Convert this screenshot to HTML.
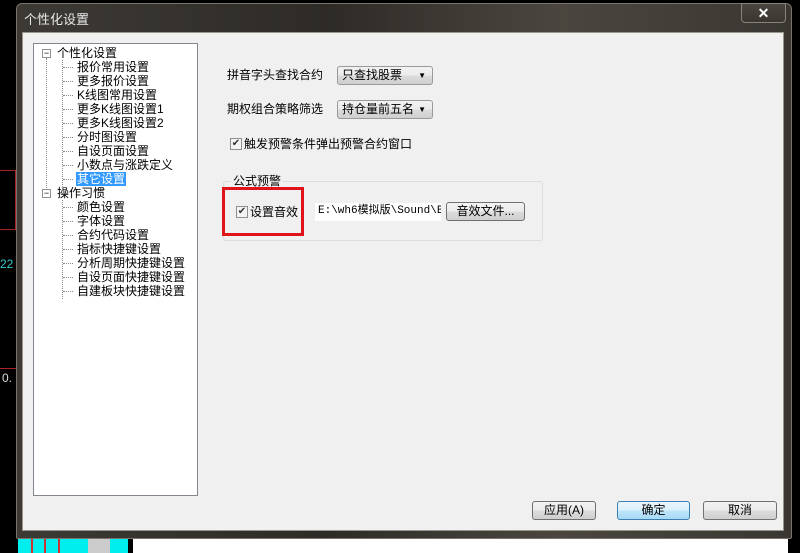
<!DOCTYPE html>
<html><head><meta charset="utf-8"><style>
*{margin:0;padding:0;box-sizing:border-box}
body{width:800px;height:553px;background:#000;position:relative;overflow:hidden;font-family:"Liberation Sans","Noto Sans CJK SC","WenQuanYi Zen Hei",sans-serif;font-size:12px;color:#000}
.a{position:absolute}
.frame{left:16px;top:3px;width:776px;height:536px;background:linear-gradient(90deg,#3d3a35,#2e2b27 40%,#4a463f 70%,#3a3732);border:1px solid #7a756c;border-radius:6px 6px 2px 2px}
.client{left:22px;top:32px;width:762px;height:499px;background:#f0f0f0;border:1px solid #9a958c}
.tree{left:33px;top:43px;width:165px;height:453px;background:#fff;border:1px solid #828790}
.t{position:absolute;white-space:nowrap;line-height:14px;font-size:12px}
.btn{position:absolute;height:19px;border:1px solid #707070;border-radius:3px;background:linear-gradient(#f2f2f2,#ebebeb 50%,#dcdcdc 51%,#cfcfcf);text-align:center;line-height:17px;font-size:12px}
.cb{position:absolute;width:12px;height:12px;border:1px solid #8e8f8f;background:#f4f4f4;font-size:10px;line-height:10px;text-align:center;color:#333}
.dots{position:absolute;border-left:1px dotted #888}
.h{position:absolute;border-top:1px dotted #888;width:10px;left:29px}
.pm{position:absolute;width:9px;height:9px;border:1px solid #919191;background:#fff;font-size:9px;line-height:6px;text-align:center}
</style></head><body>
<div class="a" style="left:0;top:170px;width:16px;height:60px;border:1px solid #a22;border-left:none"></div>
<div class="a" style="left:0;top:257px;color:#3cc;font-size:12px">22</div>
<div class="a" style="left:2px;top:371px;color:#ddd;font-size:12px">0.</div>
<div class="a" style="left:0;top:368px;width:16px;border-top:1px solid #a22"></div>
<div class="a" style="left:18px;top:538px;width:110px;height:15px;background:#0ee"></div>
<div class="a" style="left:31px;top:538px;width:2px;height:15px;background:#c33"></div>
<div class="a" style="left:44px;top:538px;width:2px;height:15px;background:#c33"></div>
<div class="a" style="left:58px;top:538px;width:2px;height:15px;background:#c33"></div>
<div class="a" style="left:133px;top:538px;width:655px;height:15px;background:#fff"></div>
<div class="a" style="left:88px;top:538px;width:22px;height:15px;background:#ccc"></div>
<div class="a frame"></div>
<div class="a" style="left:24px;top:9px;color:#e8e8e8;font-size:13px">个性化设置</div>
<div class="a" style="left:741px;top:3px;width:45px;height:20px;border:1px solid #8a857c;border-radius:0 0 4px 4px;background:linear-gradient(#4a463f,#3a3630);color:#fff;text-align:center;font-weight:bold;font-size:14px;line-height:18px">✕</div>
<div class="a client"></div>
<div class="a tree">
<div class="dots" style="left:12px;top:14px;height:136px"></div>
<div class="dots" style="left:28px;top:16px;height:127px"></div>
<div class="dots" style="left:28px;top:156px;height:99px"></div>
<div class="h" style="top:23px"></div><div class="h" style="top:37px"></div><div class="h" style="top:51px"></div><div class="h" style="top:65px"></div><div class="h" style="top:79px"></div><div class="h" style="top:93px"></div><div class="h" style="top:107px"></div><div class="h" style="top:121px"></div><div class="h" style="top:135px"></div>
<div class="h" style="top:163px"></div><div class="h" style="top:177px"></div><div class="h" style="top:191px"></div><div class="h" style="top:205px"></div><div class="h" style="top:219px"></div><div class="h" style="top:233px"></div><div class="h" style="top:247px"></div>
<div class="pm" style="left:8px;top:5px">−</div>
<div class="pm" style="left:8px;top:145px">−</div>
<div class="t" style="left:23px;top:2px">个性化设置</div>
<div class="t" style="left:43px;top:16px">报价常用设置</div>
<div class="t" style="left:43px;top:30px">更多报价设置</div>
<div class="t" style="left:43px;top:44px">K线图常用设置</div>
<div class="t" style="left:43px;top:58px">更多K线图设置1</div>
<div class="t" style="left:43px;top:72px">更多K线图设置2</div>
<div class="t" style="left:43px;top:86px">分时图设置</div>
<div class="t" style="left:43px;top:100px">自设页面设置</div>
<div class="t" style="left:43px;top:114px">小数点与涨跌定义</div>
<div class="t" style="left:42px;top:128px;background:#3399ff;color:#fff;padding:0 1px">其它设置</div>
<div class="t" style="left:23px;top:142px">操作习惯</div>
<div class="t" style="left:43px;top:156px">颜色设置</div>
<div class="t" style="left:43px;top:170px">字体设置</div>
<div class="t" style="left:43px;top:184px">合约代码设置</div>
<div class="t" style="left:43px;top:198px">指标快捷键设置</div>
<div class="t" style="left:43px;top:212px">分析周期快捷键设置</div>
<div class="t" style="left:43px;top:226px">自设页面快捷键设置</div>
<div class="t" style="left:43px;top:240px">自建板块快捷键设置</div>
</div>
<div class="t" style="left:227px;top:68px">拼音字头查找合约</div>
<div class="btn" style="left:337px;top:66px;width:96px;text-align:left;padding-left:4px;border-color:#9a9a9a">只查找股票<span style="position:absolute;right:6px;font-size:8px">▼</span></div>
<div class="t" style="left:227px;top:102px">期权组合策略筛选</div>
<div class="btn" style="left:337px;top:100px;width:96px;text-align:left;padding-left:4px;border-color:#9a9a9a">持仓量前五名<span style="position:absolute;right:6px;font-size:8px">▼</span></div>
<div class="cb" style="left:230px;top:138px">✔</div>
<div class="t" style="left:244px;top:137px">触发预警条件弹出预警合约窗口</div>
<div class="a" style="left:223px;top:181px;width:320px;height:60px;border:1px solid #dcdcdc;border-radius:3px"></div>
<div class="t" style="left:231px;top:174px;background:#f0f0f0;padding:0 2px">公式预警</div>
<div class="cb" style="left:236px;top:206px">✔</div>
<div class="t" style="left:250px;top:205px">设置音效</div>
<div class="a" style="left:222px;top:187px;width:82px;height:49px;border:3px solid #e0121a"></div>
<div class="a" style="left:315px;top:203px;width:126px;height:18px;background:#fff;font-family:'Liberation Mono','Noto Sans CJK SC',monospace;font-size:11px;line-height:17px;padding-left:3px;white-space:nowrap;overflow:hidden">E:\wh6模拟版\Sound\B</div>
<div class="btn" style="left:446px;top:202px;width:79px">音效文件...</div>
<div class="btn" style="left:532px;top:501px;width:64px">应用(A)</div>
<div class="btn" style="left:617px;top:501px;width:73px;border-color:#3c7fb1;background:linear-gradient(#eaf6fd,#d9f0fc 50%,#bee6fd 51%,#a7d9f5)">确定</div>
<div class="btn" style="left:703px;top:501px;width:74px">取消</div>
</body></html>
